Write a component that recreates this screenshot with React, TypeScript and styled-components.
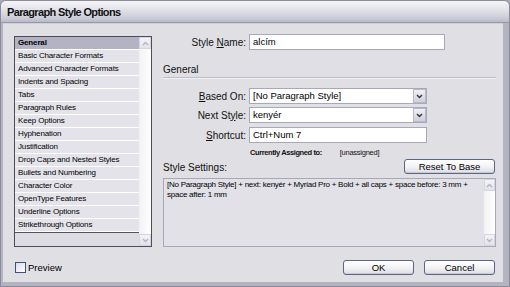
import React from "react";
import styled, { createGlobalStyle } from "styled-components";

const Global = createGlobalStyle`
  html, body { margin: 0; padding: 0; background: #a9a8b6; }
  body { font-family: "Liberation Sans", Arial, sans-serif; }
  #root { width: 510px; height: 287px; }
`;

const Frame = styled.div`
  width: 510px;
  height: 287px;
  box-sizing: border-box;
  display: flex;
  flex-direction: column;
  background: #b4b3c1;
  border: 1px solid #8b8a99;
  border-top-left-radius: 6px;
  border-top-right-radius: 6px;
  overflow: hidden;
`;

const TitleBar = styled.div`
  height: 21px;
  flex: none;
  display: flex;
  align-items: center;
  padding-left: 6px;
  background: linear-gradient(#f6f6f9 0%, #e2e2e9 40%, #cdcdd8 80%, #bbbac9 100%);
  border-bottom: 1px solid #9897a8;
  font: bold 11px "Liberation Sans", Arial, sans-serif;
  letter-spacing: -0.65px;
  color: #111;
`;

const Body = styled.div`
  flex: 1;
  margin: 0 6px 4px 2px;
  background: #e0dfe4;
  box-sizing: border-box;
  padding: 10px 7px 0 11px;
  display: flex;
  flex-direction: column;
  border-top: 1px solid #cfcfd9;
`;

const MainRow = styled.div`
  display: flex;
  align-items: flex-start;
`;

const List = styled.div`
  margin-top: 2px;
  width: 138px;
  height: 211px;
  box-sizing: border-box;
  border: 1px solid #4e4d57;
  display: flex;
  background: #e4e3ea;
`;

const Items = styled.div`
  flex: 1;
  display: flex;
  flex-direction: column;
`;

const Item = styled.div<{ $sel?: boolean }>`
  height: 13px;
  box-sizing: border-box;
  border-bottom: 1px solid #ffffff;
  padding-left: 3px;
  line-height: 12px;
  font-size: 8px;
  letter-spacing: -0.15px;
  font-weight: ${(p) => (p.$sel ? "bold" : "normal")};
  color: #000;
  background: ${(p) => (p.$sel ? "#b4b3c4" : "#e4e3ea")};
  white-space: nowrap;
  overflow: hidden;
`;

const ItemsFoot = styled.div`
  flex: 1;
  border-top: 1px solid #55545e;
  background: #dddce3;
`;

const ScrollBar = styled.div<{ $w: number }>`
  width: ${(p) => p.$w}px;
  flex: none;
  display: flex;
  flex-direction: column;
  background: linear-gradient(to right, #f2f2f6, #ffffff);
`;

const ScrollArrow = styled.div`
  height: 12px;
  flex: none;
  display: flex;
  align-items: center;
  justify-content: center;
  background: linear-gradient(#f4f4f8, #e2e2ea);
  border: 1px solid #d6d6e0;
  box-sizing: border-box;
`;

const ScrollTrack = styled.div`
  flex: 1;
`;

const RightPanel = styled.div`
  margin-left: 11px;
  width: 333px;
  display: flex;
  flex-direction: column;
`;

const FieldRow = styled.div<{ $mt?: number }>`
  display: flex;
  align-items: center;
  height: 16px;
  margin-top: ${(p) => p.$mt ?? 0}px;
`;

const Label = styled.div`
  width: 83px;
  margin-right: 3px;
  text-align: right;
  font-size: 10px;
  color: #111;
  white-space: nowrap;
`;

const TextBox = styled.div<{ $w: number }>`
  width: ${(p) => p.$w}px;
  height: 16px;
  box-sizing: border-box;
  border: 1px solid #a9a8b8;
  background: #fff;
  font-size: 9.5px;
  line-height: 14px;
  padding-left: 3px;
  color: #000;
  white-space: nowrap;
`;

const SelectBox = styled.div`
  width: 178px;
  height: 16px;
  box-sizing: border-box;
  border: 1px solid #a9a8b8;
  background: #fff;
  display: flex;
  align-items: stretch;
`;

const SelectText = styled.div`
  flex: 1;
  font-size: 9.5px;
  line-height: 14px;
  padding-left: 3px;
  color: #000;
  white-space: nowrap;
`;

const DropBtn = styled.div`
  width: 13px;
  box-sizing: border-box;
  border: 1px solid #b8b8cc;
  background: linear-gradient(#f0f0f6, #cfcfdc);
  display: flex;
  align-items: center;
  justify-content: center;
`;

const SectionHead = styled.div`
  margin-top: 12px;
  height: 15px;
  line-height: 15px;
  font-size: 10px;
  color: #111;
  border-bottom: 1px solid #bdbcc9;
  box-shadow: 0 1px 0 #f2f2f6;
`;

const Assigned = styled.div`
  margin-top: 5px;
  height: 10px;
  line-height: 10px;
  padding-left: 87px;
  font-size: 7.5px;
  letter-spacing: -0.25px;
  color: #111;
  white-space: nowrap;
  display: flex;
  gap: 18px;
  b { letter-spacing: -0.4px; }
`;

const SettingsHead = styled.div`
  margin-top: 1px;
  height: 15px;
  display: flex;
  align-items: flex-end;
  justify-content: space-between;
  padding-right: 1px;
`;

const SettingsLabel = styled.div`
  font-size: 10px;
  line-height: 12px;
  color: #111;
`;

const Button = styled.div<{ $w: number }>`
  width: ${(p) => p.$w}px;
  height: 15px;
  box-sizing: border-box;
  border: 1px solid #5b6686;
  border-radius: 3px;
  background: linear-gradient(#ffffff 0%, #f3f3f6 50%, #dcdce4 100%);
  box-shadow: inset 0 -1px 0 #c9c9d6;
  font-size: 9.5px;
  line-height: 13px;
  text-align: center;
  color: #000;
`;

const SettingsBox = styled.div`
  margin-top: 4px;
  height: 69px;
  box-sizing: border-box;
  border: 1px solid #a9a8b8;
  background: #e2e1e7;
  display: flex;
`;

const SettingsText = styled.div`
  flex: 1;
  padding: 1px 0 0 3px;
  font-size: 8px;
  line-height: 9.5px;
  letter-spacing: -0.25px;
  color: #000;
  white-space: nowrap;
`;

const BottomRow = styled.div`
  margin-top: 13px;
  display: flex;
  align-items: center;
  justify-content: space-between;
  padding-right: 1px;
`;

const PreviewWrap = styled.label`
  display: flex;
  align-items: center;
  gap: 2px;
  font-size: 9.5px;
  color: #000;
  margin-left: 1px;
`;

const CheckBox = styled.div`
  width: 9px;
  height: 9px;
  border: 1px solid #3d5378;
  background: linear-gradient(135deg, #dcdce4, #ffffff);
`;

const ButtonGroup = styled.div`
  display: flex;
  gap: 10px;
`;

const Chevron = ({ up, color = "#b4b4c2" }: { up?: boolean; color?: string }) => (
  <svg width="7" height="5" viewBox="0 0 7 5">
    <path
      d={up ? "M1 4 L3.5 1.5 L6 4" : "M1 1 L3.5 3.5 L6 1"}
      fill="none"
      stroke={color}
      strokeWidth="1.4"
    />
  </svg>
);

const items = [
  "General",
  "Basic Character Formats",
  "Advanced Character Formats",
  "Indents and Spacing",
  "Tabs",
  "Paragraph Rules",
  "Keep Options",
  "Hyphenation",
  "Justification",
  "Drop Caps and Nested Styles",
  "Bullets and Numbering",
  "Character Color",
  "OpenType Features",
  "Underline Options",
  "Strikethrough Options",
];

export default function App() {
  return (
    <>
      <Global />
      <Frame>
        <TitleBar>Paragraph Style Options</TitleBar>
        <Body>
          <MainRow>
            <List>
              <Items>
                {items.map((t, i) => (
                  <Item key={t} $sel={i === 0}>
                    {t}
                  </Item>
                ))}
                <ItemsFoot />
              </Items>
              <ScrollBar $w={12}>
                <ScrollArrow>
                  <Chevron up />
                </ScrollArrow>
                <ScrollTrack />
                <ScrollArrow>
                  <Chevron />
                </ScrollArrow>
              </ScrollBar>
            </List>
            <RightPanel>
              <FieldRow>
                <Label>
                  Style <u>N</u>ame:
                </Label>
                <TextBox $w={196}>alcím</TextBox>
              </FieldRow>
              <SectionHead>General</SectionHead>
              <FieldRow $mt={10}>
                <Label>
                  <u>B</u>ased On:
                </Label>
                <SelectBox>
                  <SelectText>[No Paragraph Style]</SelectText>
                  <DropBtn>
                    <Chevron color="#333" />
                  </DropBtn>
                </SelectBox>
              </FieldRow>
              <FieldRow $mt={3}>
                <Label>
                  Next St<u>y</u>le:
                </Label>
                <SelectBox>
                  <SelectText>kenyér</SelectText>
                  <DropBtn>
                    <Chevron color="#333" />
                  </DropBtn>
                </SelectBox>
              </FieldRow>
              <FieldRow $mt={4}>
                <Label>
                  <u>S</u>hortcut:
                </Label>
                <TextBox $w={178}>Ctrl+Num 7</TextBox>
              </FieldRow>
              <Assigned>
                <b>Currently Assigned to:</b>
                <span>[unassigned]</span>
              </Assigned>
              <SettingsHead>
                <SettingsLabel>Style Settings:</SettingsLabel>
                <Button $w={91}>Reset To Base</Button>
              </SettingsHead>
              <SettingsBox>
                <SettingsText>
                  [No Paragraph Style] + next: kenyér + Myriad Pro + Bold + all caps + space before: 3 mm +
                  <br />
                  space after: 1 mm
                </SettingsText>
                <ScrollBar $w={11}>
                  <ScrollArrow>
                    <Chevron up />
                  </ScrollArrow>
                  <ScrollTrack />
                  <ScrollArrow>
                    <Chevron />
                  </ScrollArrow>
                </ScrollBar>
              </SettingsBox>
            </RightPanel>
          </MainRow>
          <BottomRow>
            <PreviewWrap>
              <CheckBox />
              Preview
            </PreviewWrap>
            <ButtonGroup>
              <Button $w={71}>OK</Button>
              <Button $w={71}>Cancel</Button>
            </ButtonGroup>
          </BottomRow>
        </Body>
      </Frame>
    </>
  );
}
